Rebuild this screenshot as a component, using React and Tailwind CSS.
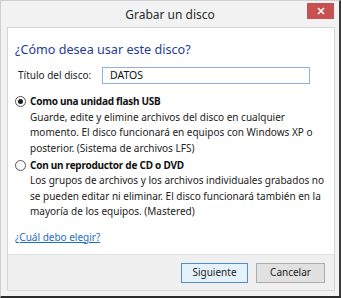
export default function App() {
  const f = { fontFamily: '"Noto Sans", "Open Sans", sans-serif' };
  return (
    <div
      className="w-[341px] h-[298px] flex flex-col bg-[#f2f2f2] border-l border-t border-[#cfcfcf] border-r-2 border-b-2 border-r-[#3a3a3a] border-b-[#2a2a2a] overflow-hidden"
      style={f}
    >
      <div className="relative h-[26px] flex items-center justify-center shrink-0">
        <span className="text-[12px] text-[#2b2b2b] leading-none mt-[2px]">Grabar un disco</span>
        <div className="absolute right-[5px] top-[2px] w-[27px] h-[16px] bg-[#c75050] flex items-center justify-center">
          <svg width="8" height="8" viewBox="0 0 8 8">
            <path d="M1 1L7 7M7 1L1 7" stroke="white" strokeWidth="1.6" />
          </svg>
        </div>
      </div>
      <div className="ml-[6px] mr-[4px] mb-[5px] flex-1 flex flex-col border border-[#d6d6d6] bg-white">
        <div className="flex-1 flex flex-col pl-[7px]">
          <div className="text-[12.6px] text-[#1f3d96] mt-[12px] leading-[20px] whitespace-nowrap">¿Cómo desea usar este disco?</div>
          <div className="flex items-center mt-[7px] h-[17px]">
            <span className="text-[10px] text-[#222] ml-[3px] w-[84px] whitespace-nowrap">Título del disco:</span>
            <div className="w-[208px] h-[17px] border border-[#8db2df] flex items-center pl-[7px] text-[10.5px] text-[#111]">
              DATOS
            </div>
          </div>
          <div className="mt-[10px] flex flex-col text-[10px] text-[#222] leading-[15.5px] whitespace-nowrap">
            <div className="flex items-center h-[15.5px]">
              <Radio checked />
              <span className="font-bold ml-[4px] text-[#111] tracking-[-0.25px]">Como una unidad flash USB</span>
            </div>
            <div className="pl-[15px]">
              Guarde, edite y elimine archivos del disco en cualquier
              <br />
              momento. El disco funcionará en equipos con Windows XP o
              <br />
              posterior. (Sistema de archivos LFS)
            </div>
            <div className="flex items-center h-[15.5px] mt-[1.5px]">
              <Radio />
              <span className="font-bold ml-[4px] text-[#111] tracking-[-0.25px]">Con un reproductor de CD o DVD</span>
            </div>
            <div className="pl-[15px]">
              Los grupos de archivos y los archivos individuales grabados no
              <br />
              se pueden editar ni eliminar. El disco funcionará también en la
              <br />
              mayoría de los equipos. (Mastered)
            </div>
          </div>
          <div className="mt-[10px] text-[10px] leading-[15.5px] text-[#1a6dc8] underline whitespace-nowrap">¿Cuál debo elegir?</div>
        </div>
        <div className="h-[36px] shrink-0 bg-[#f0f0f0] border-t border-[#dfdfdf] flex items-center justify-end gap-[8px] pr-[9px] text-[10px] text-[#222]">
          <div className="w-[67px] h-[20px] border border-[#4a90d0] bg-[#e5f1fb] flex items-center justify-center">Siguiente</div>
          <div className="w-[69px] h-[20px] border border-[#adadad] bg-[#e1e1e1] flex items-center justify-center">Cancelar</div>
        </div>
      </div>
    </div>
  );
}

function Radio({ checked }) {
  return (
    <div className="w-[11px] h-[11px] shrink-0 rounded-full border border-[#555] bg-white flex items-center justify-center">
      {checked && <div className="w-[5px] h-[5px] rounded-full bg-[#1a1a1a]" />}
    </div>
  );
}
